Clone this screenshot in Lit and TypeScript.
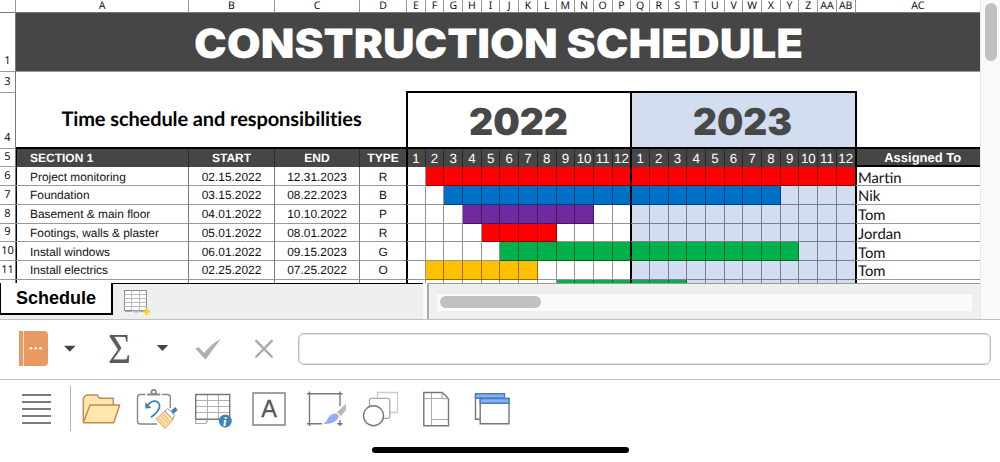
import { LitElement, html, svg, css, nothing } from "lit";
import { customElement, property } from "lit/decorators.js";
import { classMap } from "lit/directives/class-map.js";

interface Task {
  name: string;
  start: string;
  end: string;
  type: string;
  // first and last filled month, counted 1-24
  from: number;
  to: number;
  color: string;
  who: string;
}

const TASKS: Task[] = [
  { name: "Project monitoring", start: "02.15.2022", end: "12.31.2023", type: "R", from: 2, to: 24, color: "red", who: "Martin" },
  { name: "Foundation", start: "03.15.2022", end: "08.22.2023", type: "B", from: 3, to: 20, color: "blue", who: "Nik" },
  { name: "Basement & main floor", start: "04.01.2022", end: "10.10.2022", type: "P", from: 4, to: 10, color: "purple", who: "Tom" },
  { name: "Footings, walls & plaster", start: "05.01.2022", end: "08.01.2022", type: "R", from: 5, to: 8, color: "red", who: "Jordan" },
  { name: "Install windows", start: "06.01.2022", end: "09.15.2023", type: "G", from: 6, to: 21, color: "green", who: "Tom" },
  { name: "Install electrics", start: "02.25.2022", end: "07.25.2022", type: "O", from: 2, to: 7, color: "orange", who: "Tom" },
  { name: "", start: "", end: "", type: "", from: 9, to: 15, color: "green", who: "" },
];

const COLUMNS = "A B C D E F G H I J K L M N O P Q R S T U V W X Y Z AA AB AC".split(" ");
const MONTHS = Array.from({ length: 24 }, (_, i) => i + 1);

@customElement("schedule-sheet")
class ScheduleSheet extends LitElement {
  static styles = css`
    :host {
      display: block;
      height: 283px;
      overflow: hidden;
      background: #fff;
      font-family: "Liberation Sans", Arial, sans-serif;
      font-variant-ligatures: none;
      text-rendering: geometricPrecision;
      color: #111;
    }
    .grid {
      display: grid;
      grid-template-columns: 16px 173px 86px 85px 47px repeat(24, 18.7px) 1fr;
      grid-template-rows: 13px 59px 21px 56px 18.4px repeat(7, 18.72px);
    }
    .grid > div {
      box-sizing: border-box;
      min-width: 0;
      white-space: nowrap;
      display: flex;
      align-items: center;
      justify-content: center;
    }
    .col {
      border-right: 1px solid #999;
      border-bottom: 1px solid #777;
      font: 10.5px/12px "Noto Sans", sans-serif;
      color: #111;
    }
    .col:nth-child(30) {
      border-right: none;
    }
    .grid > .num {
      align-items: flex-end;
      border-right: 1px solid #777;
      border-bottom: 1px solid #999;
      font: 11px/15px "Noto Sans", sans-serif;
      color: #111;
      padding-bottom: 2px;
    }
    .grid > .num.tall {
      padding-bottom: 3px;
    }
    .title {
      grid-column: span 29;
      background: #464646;
      border-bottom: 1px solid #999;
    }
    .heavy {
      display: block;
      font-family: Inter, "Liberation Sans", sans-serif;
      font-weight: 900;
    }
    .title .heavy {
      fill: #fff;
    }
    .year .heavy {
      fill: #484848;
    }
    .blank-left {
      grid-column: span 4;
    }
    .blank-months {
      grid-column: span 24;
      border-bottom: 2px solid #000;
      margin: 0 -1px 0 -1px;
    }
    .subtitle {
      grid-column: span 4;
      border-bottom: 2px solid #000;
      font: bold 20px/24px Lato, sans-serif;
      letter-spacing: -0.1px;
      color: #000;
    }
    .grid > .subtitle {
      padding-bottom: 3px;
    }
    .year {
      grid-column: span 12;
      border-bottom: 2px solid #000;
      box-shadow: -1px 0 #000, inset 1px 0 #000;
    }
    .year.second {
      background: #d2ddf0;
    }
    .corner {
      border-bottom: 2px solid #000;
      box-shadow: -1px 0 #000, inset 1px 0 #000;
    }
    .head {
      background: #464646;
      border-right: 1px solid #2c2c2c;
      color: #fff;
      font-size: 12px;
      font-weight: bold;
    }
    .head.month {
      font-size: 13.3px;
      font-weight: normal;
    }
    .head.assigned {
      border-right: none;
      border-bottom: 2px solid #000;
      font-size: 13px;
      padding-left: 10px;
    }
    .cell {
      border-right: 1px solid #777;
      border-bottom: 1px solid #999;
      font-size: 11.9px;
      padding-top: 1px;
    }
    .grid > .name {
      justify-content: flex-start;
      padding-left: 14px;
      box-shadow: inset 1px 0 #000;
    }
    .month {
      border-color: rgba(0, 0, 0, 0.42);
    }
    .alt {
      background: #d2ddf0;
    }
    .grid > .who {
      justify-content: flex-start;
      border-right: none;
      font: 14.8px/18px Lato, sans-serif;
      padding-left: 2.500px;
      padding-top: 3px;
    }
    .edge {
      box-shadow: -1px 0 #000, inset 1px 0 #000;
    }
    .red {
      background: #fe0000;
    }
    .blue {
      background: #0070c6;
    }
    .purple {
      background: #7129a0;
    }
    .green {
      background: #00b14c;
    }
    .orange {
      background: #ffc000;
    }
  `;

  monthCell(task: Task, m: number) {
    const filled = m >= task.from && m <= task.to;
    return html`<div
      class=${classMap({
        cell: true,
        month: true,
        alt: m > 12 && !filled,
        edge: m === 1 || m === 13,
        [task.color]: filled,
      })}
    ></div>`;
  }

  render() {
    return html`
      <div class="grid">
        <div class="col"></div>
        ${COLUMNS.map((c) => html`<div class="col">${c}</div>`)}

        <div class="num tall">1</div>
        <div class="title">
          <svg class="heavy" width="612" height="54">
            <text x="2" y="43" font-size="40.5" textLength="609" lengthAdjust="spacingAndGlyphs">CONSTRUCTION SCHEDULE</text>
          </svg>
        </div>

        <div class="num tall">3</div>
        <div class="blank-left"></div>
        <div class="blank-months"></div>
        <div></div>

        <div class="num tall">4</div>
        <div class="subtitle">Time schedule and responsibilities</div>
        ${[2022, 2023].map(
          (y) => html`<div class="year ${y === 2023 ? "second" : ""}">
            <svg class="heavy" width="104" height="54">
              <text x="2" y="42" font-size="37" textLength="99" lengthAdjust="spacingAndGlyphs">${y}</text>
            </svg>
          </div>`
        )}
        <div class="corner"></div>

        <div class="num">5</div>
        <div class="head name">SECTION 1</div>
        <div class="head">START</div>
        <div class="head">END</div>
        <div class="head">TYPE</div>
        ${MONTHS.map(
          (m) => html`<div class="head month ${m % 12 === 1 ? "edge" : ""}">${((m - 1) % 12) + 1}</div>`
        )}
        <div class="head assigned edge">Assigned To</div>

        ${TASKS.map(
          (t, i) => html`
            <div class="num">${t.name ? i + 6 : nothing}</div>
            <div class="cell name">${t.name}</div>
            <div class="cell">${t.start}</div>
            <div class="cell">${t.end}</div>
            <div class="cell">${t.type}</div>
            ${MONTHS.map((m) => this.monthCell(t, m))}
            <div class="cell who edge">${t.who}</div>
          `
        )}
      </div>
    `;
  }
}

@customElement("sheet-tabs")
class SheetTabs extends LitElement {
  static styles = css`
    :host {
      display: flex;
      height: 36px;
      background: #efefef;
    }
    .tab {
      box-sizing: border-box;
      width: 113px;
      height: 32px;
      background: #fff;
      border: solid #000;
      border-width: 0 2px 2px 1px;
      font: bold 18px/31px "Liberation Sans", Arial, sans-serif;
      text-align: center;
      color: #000;
    }
    .strip {
      width: 310px;
      border-top: 1px solid #000;
      box-sizing: border-box;
    }
    .strip svg {
      display: block;
      margin: 5px 0 0 10px;
    }
    .split {
      width: 4px;
      background: #fafafa;
      border-right: 2px solid #aaa;
    }
    .scroll {
      flex: 1;
      box-sizing: border-box;
      border-top: 1px solid #999;
      padding: 9px 8px 0;
    }
    .track {
      height: 18px;
      box-sizing: border-box;
      background: #fafafa;
      border-top: 1px solid #e9e9e9;
      padding: 2px 3px;
    }
    .thumb {
      width: 101px;
      height: 12px;
      border-radius: 6px;
      background: #c1c1c1;
    }
  `;

  render() {
    return html`
      <div class="tab">Schedule</div>
      <div class="strip">
        <svg width="30" height="28" fill="none">
          <path d="M1.5 1.5h22v20h-22z" fill="#fff" stroke="#8a8a8a" />
          <path d="M1.5 5.5h22M1.5 9.5h22M1.5 13.5h22M1.5 17.5h22M8.5 1.5v20M16.5 1.5v20" stroke="#bbb" />
          <path d="M2 22.5h7M17 22.5h6" stroke="#aaa" />
          <path d="M9 21.5h9l-2 2h-5z" fill="#9cc3e2" />
          <path d="M23.5 19v7M20 22.5h7" stroke="#fc0" stroke-width="2" />
        </svg>
      </div>
      <div class="split"></div>
      <div class="scroll"><div class="track"><div class="thumb"></div></div></div>
    `;
  }
}

@customElement("formula-bar")
class FormulaBar extends LitElement {
  static styles = css`
    :host {
      display: flex;
      align-items: center;
      height: 59px;
      border-top: 1px solid #c0c0c0;
      border-bottom: 1px solid #c4c4c4;
      background: #fff;
    }
    svg {
      display: block;
      flex: none;
    }
    .sigma {
      font-family: "Liberation Serif", "Times New Roman", serif;
      fill: #5a5a5a;
    }
    .field {
      box-sizing: border-box;
      width: 693px;
      height: 32px;
      margin-bottom: 1px;
      border: 1.5px solid #bdbdbd;
      border-radius: 6px;
      box-shadow: inset 0 0 0 0.5px #ccc;
    }
  `;

  render() {
    return html`
      <svg width="298" height="59" fill="none">
        <path d="M19 11h25q4 0 4 4v27q0 4-4 4h-25z" fill="#e89a62" />
        <path d="M23.5 11v35" stroke="#fbe6d8" />
        <g fill="#fff">
          <circle cx="31" cy="28.3" r="1.3" />
          <circle cx="35.7" cy="28.3" r="1.3" />
          <circle cx="40.4" cy="28.3" r="1.3" />
        </g>
        <path d="M64 25.7h11.5l-5.7 6z" fill="#444" />
        <text class="sigma" x="108" y="42.5" font-size="42" textLength="23" lengthAdjust="spacingAndGlyphs">Σ</text>
        <path d="M156.7 25h11.5l-5.7 6z" fill="#444" />
        <path d="M195.5 28.8l3-1.8 5.8 6q6.5-9 16.4-14l-15.2 20.7z" fill="#b0b0b0" />
        <path d="M255.5 20.2l17 17.3M272.5 20.2l-17 17.3" stroke="#aaa" stroke-width="2.4" />
      </svg>
      <div class="field"></div>
    `;
  }
}

const ICONS = {
  folder: svg`
    <g fill="#ffe5ae" stroke="#c4894d" stroke-width="1.4" stroke-linejoin="round">
      <path d="M10.3 42.3V18.2l3-3.2h11l2.2 3.3h13.8V26" />
      <path d="M10.3 42.7L17 25h29.7l-6 17.7z" />
    </g>`,
  restyle: svg`
    <path d="M16.5 14.5H11.5q-3 0-3 3v23.5q0 3 3 3H28M33 14.5h5.3q3 0 3 3V28" stroke="#888" stroke-width="1.4" />
    <path d="M18 15.6h13.5v-1q0-1-1.5-1h-2.200q.6-4.600-3.100-4.600t-3.100 4.600H19.500q-1.500 0-1.500 1z" fill="#888" />
    <circle cx="24.7" cy="12" r="1.3" fill="#fff" />
    <path d="M22 37.300c8-6 10.500-11.500 7-15q-5-3.500-10.500 3" stroke="#3f83b5" stroke-width="1.8" />
    <path d="M16.3 22.300v6.200l6.200-.5z" fill="#3f83b5" />
    <path d="M47.500 28.500l-5.500 5" stroke="#3f83b5" stroke-width="3.8" />
    <path d="M27 39l9.500-8.500 8 8.500-8.500 9.500z" fill="#ffdfa6" stroke="#d8a468" />
    <path d="M29.500 38.500l7 7.500M32 36l7 7.500M34 34l7 7.500" stroke="#d8a468" stroke-width=".7" />
    <path d="M36 31l2.500-2.500q4.500 3 7 7l-2 3.500z" fill="#fff" stroke="#999" />`,
  table: svg`
    <path d="M11 20.500h33.500M11 26.500h33.500M11 32.500h33.500M22.500 14.500v25M33.500 14.500v25" stroke="#b0b0b0" />
    <path d="M10.700 14.500h34v24.700h-34z" stroke="#777" stroke-width="1.400" />
    <path d="M10.700 39v4.500h9.500q1.600-.3 2.800-4.500" stroke="#aaa" stroke-width="1.200" />
    <circle cx="40.300" cy="41" r="6.500" fill="#3f83b5" />
    <text class="info" x="38" y="45.500" font-size="13">i</text>`,
  text: svg`
    <path d="M12 13h32v32H12z" stroke="#808080" stroke-width="1.400" />
    <text class="letter" x="28" y="37" font-size="23.500" text-anchor="middle">A</text>`,
  frame: svg`
    <path d="M12.500 11.500v34.500M10 13.700h35.500M43 11.500V26M43 40v6M10 43.700h15M40 43.700h5.500" stroke="#777" stroke-width="1.400" />
    <path d="M26.500 44q3.500-3 5-6.500 3-4.500 7.500-4 4 1.500 2 5-3.500 5.500-14.500 5.500z" fill="#8fadf8" />
    <path d="M39.500 32.500L49 23.500v6.500l-5.500 6.500q-.5-3-4-4z" fill="#bbb" />`,
  shapes: svg`
    <path d="M24.500 12.500h20v20h-20z" stroke="#ccc" stroke-width="1.300" fill="#fff" />
    <rect x="16.500" y="18.300" width="20.300" height="20" rx="2" stroke="#aaa" stroke-width="1.300" fill="#fff" />
    <circle cx="20.500" cy="35.700" r="10" stroke="#777" stroke-width="1.400" fill="#fff" />`,
  page: svg`
    <path d="M22.500 12.500v33M15 18.500h18M22.500 39.500h17" stroke="#aaa" />
    <path d="M14.800 12.500h18.500l6.200 6.200v27H14.800z" stroke="#777" stroke-width="1.400" />
    <path d="M33 12.500v6.200h6.500" stroke="#999" />`,
  windows: svg`
    <path d="M10.500 14v25.300H15" stroke="#777" stroke-width="1.400" />
    <path d="M10.500 13.800h29v4.500h-29z" fill="#8fadf8" stroke="#3f83b5" stroke-width="1.400" />
    <path d="M15.200 18.500h28.800v25.300H15.200z" fill="#fff" stroke="#777" stroke-width="1.400" />
    <path d="M15.200 18.500h28.800v4.700H15.200z" fill="#8fadf8" stroke="#3f83b5" stroke-width="1.400" />`,
};

@customElement("tool-icon")
class ToolIcon extends LitElement {
  static styles = css`
    :host {
      display: block;
    }
    svg {
      display: block;
    }
    .info {
      font-family: "Liberation Serif", serif;
      font-weight: bold;
      font-style: italic;
      fill: #fff;
    }
    .letter {
      font-family: "Liberation Sans", Arial, sans-serif;
      fill: #555;
      stroke: #555;
      stroke-width: 0.3px;
    }
  `;

  @property() name: keyof typeof ICONS = "folder";

  render() {
    return html`<svg width="56" height="60" fill="none">${ICONS[this.name]}</svg>`;
  }
}

@customElement("app-root")
class AppRoot extends LitElement {
  static styles = css`
    :host {
      display: flex;
      flex-direction: column;
      height: 462px;
      background: #fff;
      overflow: hidden;
    }
    .top {
      display: grid;
      grid-template-columns: 980px 20px;
      height: 319px;
    }
    .side {
      box-sizing: border-box;
      background: #f9f9f9;
      border-left: 1px solid #e9e9e9;
      padding: 3px 3px 0 4px;
    }
    .side .thumb {
      width: 12px;
      height: 58px;
      border-radius: 6px;
      background: #c1c1c1;
    }
    .tools {
      display: flex;
      height: 60px;
    }
    .lines {
      display: flex;
      flex-direction: column;
      gap: 5px;
      width: 29px;
      padding: 14px 19px 0 22px;
    }
    .lines i {
      height: 2px;
      background: #7c7c7c;
    }
    .sep {
      width: 1px;
      height: 45px;
      margin: 6px 2px 0 0;
      background: #b5b5b5;
    }
    .home {
      width: 257px;
      height: 6px;
      margin: 7px auto 0;
      border-radius: 3px;
      background: #000;
    }
  `;

  render() {
    return html`
      <div class="top">
        <div>
          <schedule-sheet></schedule-sheet>
          <sheet-tabs></sheet-tabs>
        </div>
        <div class="side"><div class="thumb"></div></div>
      </div>
      <formula-bar></formula-bar>
      <div class="tools">
        <div class="lines"><i></i><i></i><i></i><i></i><i></i></div>
        <div class="sep"></div>
        ${Object.keys(ICONS).map((name) => html`<tool-icon name=${name}></tool-icon>`)}
      </div>
      <div class="home"></div>
    `;
  }
}
